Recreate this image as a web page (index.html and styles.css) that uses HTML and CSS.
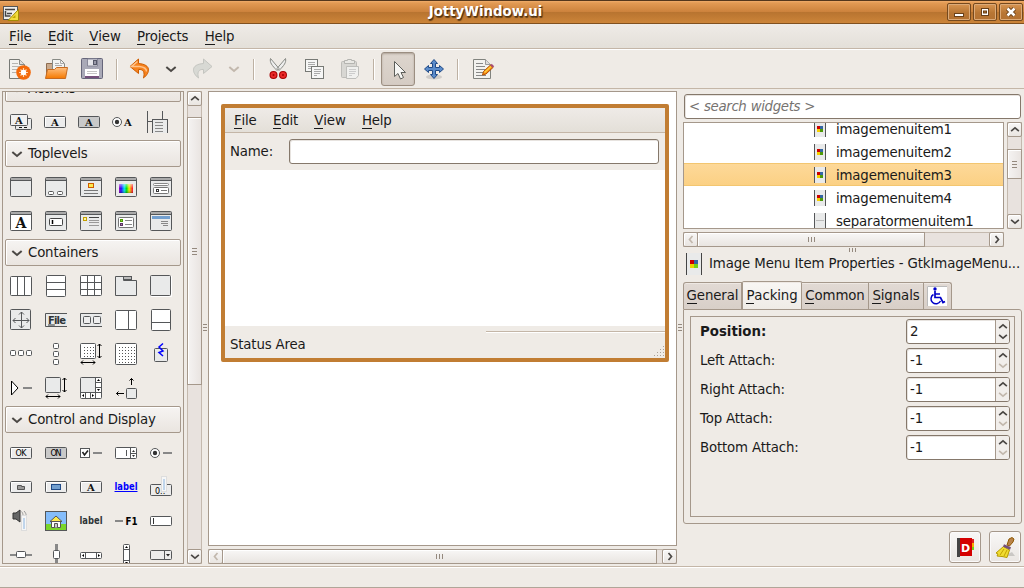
FILE: index.html
```html
<!DOCTYPE html>
<html lang="en">
<head>
<meta charset="utf-8">
<title>JottyWindow.ui</title>
<link rel="stylesheet" href="styles.css">
</head>
<body>
<svg class="defs" width="0" height="0">
  <defs>
    <linearGradient id="rainbow"><stop offset="0" stop-color="#a000c0"/><stop offset=".15" stop-color="#2000ff"/><stop offset=".38" stop-color="#00e0f0"/><stop offset=".55" stop-color="#00e000"/><stop offset=".72" stop-color="#f0f000"/><stop offset="1" stop-color="#ff0030"/></linearGradient>
    <linearGradient id="fade" x2="0" y2="1"><stop offset="0" stop-color="#fff" stop-opacity=".9"/><stop offset=".5" stop-color="#fff" stop-opacity="0"/><stop offset="1" stop-color="#000" stop-opacity=".5"/></linearGradient>
    <linearGradient id="orange" x2="0" y2="1"><stop offset="0" stop-color="#ffc183"/><stop offset="1" stop-color="#f57900"/></linearGradient>
    <pattern id="dots" width="3" height="3" patternUnits="userSpaceOnUse"><rect x="1" y="1" width="1" height="1" fill="#555"/></pattern>
    <symbol id="win" viewBox="0 0 22 22"><rect x=".5" y="1.5" width="21" height="19" rx="1" fill="#e9eaea" stroke="#555759"/><rect x="1" y="2" width="20" height="2" fill="#aaa"/><path d="M1 4.5h20" stroke="#555759"/></symbol>
    <symbol id="btn" viewBox="0 0 22 22"><rect x=".5" y="5.5" width="21" height="11" rx="1" fill="#ececec" stroke="#555759"/><path d="M1.500 15V6.500H21" stroke="#fff" fill="none"/></symbol>
    <symbol id="up" viewBox="0 0 9 6"><path d="M1 4.500l3.500-3 3.500 3" fill="none" stroke="currentColor" stroke-width="1.500"/></symbol>
    <symbol id="down" viewBox="0 0 9 6"><path d="M1 1.500l3.500 3 3.500-3" fill="none" stroke="currentColor" stroke-width="1.500"/></symbol>
    <symbol id="left" viewBox="0 0 6 9"><path d="M4.500 1l-3 3.500 3 3.500" fill="none" stroke="currentColor" stroke-width="1.700"/></symbol>
    <symbol id="right" viewBox="0 0 6 9"><path d="M1.500 1l3 3.500-3 3.500" fill="none" stroke="currentColor" stroke-width="1.700"/></symbol>
    <symbol id="menuitem" viewBox="0 0 12 16"><path d="M0 0h12v16H0z" fill="#e9eaea"/><path d="M.5 0v16M11.500 0v16" stroke="#555759"/><path d="M3 5h3v3H3z" fill="#c00"/><path d="M6 5h3v3H6z" fill="#3465a4"/><path d="M3 8h3v3H3z" fill="#f5d000"/><path d="M6 8h3v3H6z" fill="#4e9a06"/></symbol>
    <symbol id="sizebox" viewBox="0 0 22 22"><path d="M19.500 1v14M1 19.500h14" stroke="#000"/><path d="M17.500 3l2-2 2 2M17.500 13l2 2 2-2M3 17.500l-2 2 2 2M13 17.500l2 2-2 2" fill="none" stroke="#000"/></symbol>
  </defs>
</svg>
<div class="app">
  <header class="titlebar">
    <svg class="app-icon" width="16" height="16"><rect x=".5" y=".5" width="14" height="13" fill="#eeeeec" stroke="#555"/><path d="M2 3.500h10M4 7.500h5M2.500 5v5h5" stroke="#444" stroke-width="1.500" fill="none"/><path d="M15.500 3.500v11H5z" fill="#f2dc3c" stroke="#a38a00"/><path d="M12.500 9v3H9z" fill="#c4a500"/></svg>
    <h1>JottyWindow.ui</h1>
    <div class="winbtns">
      <span><svg width="22" height="16"><rect x="6.500" y="9.500" width="9" height="3" fill="#fff" stroke="#694019"/></svg></span>
      <span><svg width="22" height="16"><rect x="7.500" y="4.500" width="7" height="7" fill="#fff" stroke="#694019"/><rect x="9.500" y="7" width="3" height="2" fill="#b87531" stroke="#694019"/></svg></span>
      <span><svg width="22" height="16"><path d="M7.500 4.500l7 7M14.500 4.500l-7 7" stroke="#694019" stroke-width="4.500"/><path d="M7.500 4.500l7 7M14.500 4.500l-7 7" stroke="#fff" stroke-width="2.500"/></svg></span>
    </div>
  </header>
  <nav class="menubar"><a><u>F</u>ile</a><a><u>E</u>dit</a><a><u>V</u>iew</a><a><u>P</u>rojects</a><a><u>H</u>elp</a></nav>
  <div class="toolbar">
    <span class="tool"><svg width="24" height="24"><path d="M1.500 2.500h10l5 5v14h-15z" fill="#f2f2f0" stroke="#777975"/><path d="M11.500 2.500v5h5" fill="#ddd" stroke="#888a85"/><path d="M4 6.500h6M4 9.500h9M4 12.500h8M4 15.500h4" stroke="#b5b5b2"/><circle cx="15.500" cy="15.500" r="7.300" fill="#f36a0c"/><path d="M15.500 11v9M11 15.500h9M12.500 12.500l6 6M18.500 12.500l-6 6" stroke="#ffd5ac" stroke-width="1.200"/><circle cx="15.500" cy="15.500" r="2.700" fill="#fff"/></svg></span>
    <span class="tool"><svg width="24" height="24"><path d="M2.500 20V6.500h6l1.500 2h10V20z" fill="#c9a98c" stroke="#8d6c50"/><path d="M8.500 2.500h8l4 4V16h-12z" fill="#f3f3f1" stroke="#888a85"/><path d="M16.500 2.500v4h4M11 6.500h4M11 8.500h7" stroke="#aaa" fill="none"/><path d="M1.500 21.500l2-9h7l2-2h11l-2 11z" fill="url(#orange)" stroke="#c66a20"/></svg></span>
    <span class="tool"><svg width="24" height="24"><rect x="1.500" y="1.500" width="21" height="20" rx="1" fill="#a9a9b7" stroke="#66667a"/><rect x="5" y="12" width="14" height="9" fill="#fff"/><path d="M7 14.500h10M7 16.500h10" stroke="#c5c5c5"/><path d="M5 20h14" stroke="#75507b" stroke-width="2"/><path d="M7.500 2h10v7h-10z" fill="#e5e5ea" stroke="#888899"/><rect x="13.500" y="3.500" width="3" height="4" fill="#9999a9" stroke="#555768"/></svg></span>
    <i class="sep"></i>
    <span class="tool"><svg width="24" height="24"><path d="M10.500 2L2 9.500l8.500 7v-4c5-.5 6.500 3 5 8.500 6.500-5 8.500-13.500-5-14.500z" fill="#f6821e" stroke="#ce5c00"/><path d="M9.500 4.500l-6 5h8c5 .5 7 2 7 5" fill="none" stroke="#ffc38b" stroke-width="1.500"/></svg></span>
    <span class="tool arrow"><svg width="12" height="8"><use href="#down"/></svg></span>
    <span class="tool"><svg width="24" height="24"><path d="M13.500 2l8.500 7.500-8.500 7v-4c-5-.5-6.500 3-5 8.500C2 16 0 7.500 13.500 6.500z" fill="#d8d9d4" stroke="#c4c5c0"/></svg></span>
    <span class="tool arrow off"><svg width="12" height="8"><use href="#down"/></svg></span>
    <i class="sep"></i>
    <span class="tool cut"><svg width="24" height="24"><path d="M4.500 1.500c-1 4 1.500 7 6.500 12l2-2z M19.500 1.500c1 4-1.500 7-6.500 12l-2-2z" fill="#eee" stroke="#888a85"/><g fill="none" stroke="#a40000" stroke-width="4"><ellipse cx="7.500" cy="18" rx="2" ry="2"/><ellipse cx="17" cy="18" rx="2" ry="2"/></g><g fill="none" stroke="#e92929" stroke-width="2"><ellipse cx="7.500" cy="18" rx="2" ry="2"/><ellipse cx="17" cy="18" rx="2" ry="2"/></g></svg></span>
    <span class="tool"><svg width="24" height="24" class="px"><rect x="3.500" y="2.500" width="12" height="12" fill="#f6f6f5" stroke="#777975"/><path d="M6 5.500h7M6 7.500h7M6 9.500h6M6 11.500h4" stroke="#aaa"/><rect x="9.500" y="9.500" width="12" height="12" fill="#f6f6f5" stroke="#777975"/><path d="M12 12.500h7M12 14.500h7M12 16.500h6M12 18.500h3" stroke="#aaa"/></svg></span>
    <span class="tool"><svg width="24" height="24"><rect x="3.500" y="4.500" width="15" height="16" rx="1" fill="#d8d7d3" stroke="#bdbcb8"/><path d="M6.500 6.500v-3h3v-1h4v1h3v3z" fill="#e9e8e4" stroke="#b4b4b0"/><path d="M8.500 9.500h12v9l-2.500 3H8.500z" fill="#f0f0ee" stroke="#bebebb"/><path d="M11 12.500h7M11 14.500h7M11 16.500h6M11 18.500h3" stroke="#ccc"/></svg></span>
    <i class="sep tight"></i>
    <span class="tool pressed"><svg width="24" height="24"><path d="M8.500 4.500v15l3.500-3 2.500 5.500 3-1.500-2.500-5h4.500z" fill="#f6f6f4" stroke="#5c5e5a"/></svg></span>
    <span class="tool move"><svg width="24" height="24"><ellipse cx="12" cy="20" rx="8" ry="2.500" fill="#000" opacity=".13"/><path d="M12 2.500l3.500 4h-2v4h4v-2l4 3.500-4 3.500v-2h-4v4h2l-3.500 4-3.500-4h2v-4h-4v2L2.500 12l4-3.500v2h4v-4h-2z" fill="#5b8ccb" stroke="#204a87"/></svg></span>
    <i class="sep tight"></i>
    <span class="tool notes"><svg width="24" height="24"><path d="M2.500 2.500h12l5 5v14h-17z" fill="#f2f2ef" stroke="#81837e"/><path d="M14.500 2.500v5h5" fill="#ddd" stroke="#999"/><path d="M5 6.500h7M5 9.500h9M5 12.500h9M5 15.500h7M5 18.500h10" stroke="#888"/><path d="M11.500 18l1-3.500 7-6.500 2.500 2.500-7 6.500z" fill="#f78a12" stroke="#b35100"/><path d="M13.500 15.500l6.500-6" stroke="#fcd03f" stroke-width="1.500"/><path d="M20 7.500l2.500 2.500" stroke="#a94c74" stroke-width="2"/></svg></span>
  </div>

  <main class="workspace">
    <aside class="palette">
      <div class="palette-list">
        <h2><svg width="12" height="8"><use href="#down"/></svg>Actions</h2>
        <div class="icons narrow">
          <svg><rect x="5.500" y="7.500" width="16" height="11" rx="1" fill="#e9eaea" stroke="#555759"/><rect x=".5" y="3.500" width="17" height="11" rx="1" fill="#f1f1f1" stroke="#555759"/><path d="M9 16.500h3M14 16.500h3" stroke="#111"/><text class="serif" x="5" y="13">A</text></svg>
          <svg><use href="#btn"/><text class="serif" x="7" y="15">A</text></svg>
          <svg><rect x=".5" y="5.500" width="21" height="11" rx="1" fill="#c9c9c9" stroke="#555759"/><text class="serif" x="7" y="15">A</text></svg>
          <svg><circle cx="5" cy="11" r="4.500" fill="#fff" stroke="#555759"/><circle cx="5" cy="11" r="2.200" fill="#333"/><text class="serif" x="12" y="15">A</text></svg>
          <svg class="px"><path d="M1.500 0v22M16.500 0v8" stroke="#555759"/><path d="M2 10.500h4" stroke="#555759"/><path d="M6.500 22V8.500h15V22" fill="#e9eaea" stroke="#555759"/><path d="M9 11.500h8M9 14.500h8M9 17.500h8M9 20.500h8" stroke="#888"/></svg>
        </div>
        <h2><svg width="12" height="8"><use href="#down"/></svg>Toplevels</h2>
        <div class="icons">
          <svg><use href="#win"/></svg>
          <svg><use href="#win"/><rect x="3.500" y="15.500" width="5" height="3" rx="1" fill="#fff" stroke="#555"/><rect x="12.500" y="15.500" width="5" height="3" rx="1" fill="#fff" stroke="#555"/></svg>
          <svg><use href="#win"/><rect x="8.500" y="7.500" width="5" height="4" fill="#fce94f" stroke="#ce5c00"/><path d="M4 14.500h14M4 17.500h14" stroke="#777"/></svg>
          <svg><use href="#win"/><rect x="4" y="8" width="14" height="9" fill="url(#rainbow)"/><rect x="4" y="8" width="14" height="9" fill="url(#fade)" opacity=".6"/></svg>
          <svg><use href="#win"/><rect x="3.500" y="7.500" width="15" height="2" rx="1" fill="#fff" stroke="#888"/><rect x="3.500" y="11.500" width="15" height="6" rx="1" fill="#fff" stroke="#777"/><rect x="6.500" y="13.500" width="2" height="2" fill="#fff" stroke="#333"/><path d="M11 14.500h6" stroke="#777"/></svg>
          <svg><use href="#win"/><path d="M1 5h20v15H1z" fill="#fff"/><text class="serif" style="font-size:14px" x="5.500" y="17.500">A</text></svg>
          <svg><use href="#win"/><rect x="4.500" y="8.500" width="13" height="7" rx="1" fill="#fff" stroke="#444"/><path d="M7.500 10v4" stroke="#000" stroke-width="1.500"/></svg>
          <svg><use href="#win"/><rect x="3.500" y="7.500" width="3" height="3" fill="#fff3a0" stroke="#c4a000"/><path d="M9 7.500h10" stroke="#444"/><path d="M9 10.500h10M9 12.500h10M9 15.500h10" stroke="#999"/></svg>
          <svg><use href="#win"/><rect x="3.500" y="7.500" width="15" height="10" rx="1" fill="#fff" stroke="#777"/><rect x="5.500" y="9.500" width="2" height="2" fill="#8ae234" stroke="#4e9a06"/><rect x="5.500" y="13.500" width="2" height="2" fill="#ad7fa8" stroke="#5c3566"/><path d="M10 10.500h7M10 14.500h7" stroke="#888"/></svg>
          <svg><use href="#win"/><path d="M2 6h18v3H2z" fill="#729fcf"/><path d="M11 11.500h7M11 13.500h7M13 15.500h5" stroke="#888"/></svg>
        </div>
        <h2><svg width="12" height="8"><use href="#down"/></svg>Containers</h2>
        <div class="icons ln">
          <svg><rect x=".5" y="1.500" width="21" height="19" rx="1" fill="#fff"/><path d="M7.500 2v18M14.500 2v18"/></svg>
          <svg><rect x="1.500" y=".5" width="19" height="21" rx="1" fill="#fff"/><path d="M2 7.500h18M2 14.500h18"/></svg>
          <svg><rect x=".5" y=".5" width="21" height="20" rx="1" fill="#fff"/><path d="M7.500 1v19M14.500 1v19M1 7.500h20M1 14.500h20"/></svg>
          <svg><path d="M.5 20.500v-19h8v4h13v15z" fill="#e9eaea"/><rect x="8.500" y="1.500" width="8" height="3" fill="#bbb"/></svg>
          <svg><rect x=".5" y=".5" width="20" height="20" rx="1" fill="#e9eaea"/><path d="M21.500 1v20.500H1" style="stroke:#fff" fill="none"/></svg>
          <svg><rect x=".5" y=".5" width="20" height="20" rx="1" fill="#e9eaea"/><path d="M3 11.500h16M11.500 3v16M9 5.500L11.500 3 14 5.500M9 16.500l2.500 2.500 2.500-2.500M5.500 9L3 11.500 5.500 14M16.500 9l2.500 2.500-2.500 2.500" fill="none"/></svg>
          <svg><path d="M22 4.500H.5v13H22" fill="#e9eaea"/><text class="bold" x="3" y="14.500" textLength="18"><tspan text-decoration="underline">F</tspan>ile</text></svg>
          <svg><path d="M22 4.500H.5v13H22" fill="#e9eaea"/><rect x="3.500" y="7.500" width="7" height="7" rx="1" fill="#eee"/><rect x="13.500" y="7.500" width="7" height="7" rx="1" fill="#eee"/></svg>
          <svg><rect x=".5" y="1.500" width="21" height="19" rx="1" fill="#fff"/><path d="M13.500 2v18"/></svg>
          <svg><rect x="1.500" y=".5" width="19" height="21" rx="1" fill="#fff"/><path d="M2 13.500h18"/></svg>
          <svg><rect x=".5" y="7.500" width="5" height="5" rx="1" fill="#fff"/><rect x="8.500" y="7.500" width="5" height="5" rx="1" fill="#fff"/><rect x="16.500" y="7.500" width="5" height="5" rx="1" fill="#fff"/></svg>
          <svg><rect x="8.500" y=".5" width="5" height="5" rx="1" fill="#fff"/><rect x="8.500" y="8.500" width="5" height="5" rx="1" fill="#fff"/><rect x="8.500" y="16.500" width="5" height="5" rx="1" fill="#fff"/></svg>
          <svg><rect x=".5" y=".5" width="15" height="15" rx="1" fill="#fff"/><rect x="2" y="2" width="12" height="12" fill="url(#dots)" style="stroke:none"/><use href="#sizebox"/></svg>
          <svg><rect x=".5" y=".5" width="21" height="21" rx="1" fill="#fff"/><rect x="2" y="2" width="18" height="18" fill="url(#dots)" style="stroke:none"/></svg>
          <svg><rect x="4.500" y="5.500" width="13" height="13" rx="1" fill="#e9eaea"/><path d="M13 .5L9 4l4 4-4 1.500 4 3.500" fill="none" style="stroke:#00f;stroke-width:1.500"/></svg>
          <svg><path d="M1.500 4v14L8 11z" fill="#fff" style="stroke:#000"/><path d="M13 11h9" style="stroke:#888;stroke-width:2"/></svg>
          <svg><rect x=".5" y=".5" width="15" height="15" rx="1" fill="#e9eaea"/><use href="#sizebox"/></svg>
          <svg><rect x=".5" y=".5" width="21" height="21" rx="1" fill="#fff"/><path d="M1 1h14v14H1z" fill="#e9eaea" stroke="none"/><path d="M15.500 1v20M1 15.500h20M5.500 16v5M10.500 16v5M16 5.500h5M16 10.500h5"/><path d="M17 4l1.500-2L20 4zM17 12l1.500 2L20 12zM4 17v3l-2-1.500zM12 17v3l2-1.500z" fill="#000" stroke="none"/></svg>
          <svg><rect x="11.500" y="11.500" width="10" height="10" rx="1" fill="#e9eaea"/><path d="M16.500 8V1.500M14.500 3.500l2-2 2 2M9 16.500H1.500M3.500 14.500l-2 2 2 2" fill="none" style="stroke:#000"/></svg>
        </div>
        <h2><svg width="12" height="8"><use href="#down"/></svg>Control and Display</h2>
        <div class="icons">
          <svg><use href="#btn"/><text class="tiny" x="5.500" y="14" textLength="11">OK</text></svg>
          <svg><rect x=".5" y="5.500" width="21" height="11" rx="1" fill="#c9c9c9" stroke="#555759"/><text class="tiny" x="5.500" y="14" textLength="11">ON</text></svg>
          <svg><rect x=".5" y="6.500" width="9" height="9" fill="#fff" stroke="#555759"/><path d="M2.500 10l2 3L8 8.500" fill="none" stroke="#222" stroke-width="1.600"/><path d="M13 11h9" stroke="#888" stroke-width="2"/></svg>
          <svg><rect x=".5" y="5.500" width="21" height="11" rx="1" fill="#fff" stroke="#555759"/><path d="M15.500 6v10M16 11.500h5M11.500 8v6" stroke="#555759"/><path d="M17 10l1.500-2L20 10zM17 13l1.500 2L20 13z" fill="#333"/></svg>
          <svg><circle cx="5" cy="11" r="4.500" fill="#fff" stroke="#555759"/><circle cx="5" cy="11" r="2.200" fill="#333"/><path d="M13 11h9" stroke="#888" stroke-width="2"/></svg>
          <svg><use href="#btn"/><path d="M7.500 13.500v-4h4v1h3v3z" fill="#999" stroke="#555"/></svg>
          <svg><use href="#btn"/><rect x="6.500" y="8.500" width="9" height="5" fill="#729fcf" stroke="#204a87"/></svg>
          <svg><use href="#btn"/><text class="serif" x="7" y="15">A</text></svg>
          <svg><text class="bold" x="-.5" y="14" textLength="23" lengthAdjust="spacingAndGlyphs" style="fill:#00f;text-decoration:underline">label</text></svg>
          <svg><rect x=".5" y="8.500" width="21" height="11" rx="1" fill="#ececec" stroke="#555759"/><text class="tiny" x="5" y="17.500">0..</text><rect x="11.500" y=".5" width="5" height="15" fill="#f6f6f6" stroke="#ddd"/><path d="M14 3v11" stroke="#8ab4e0"/></svg>
          <svg><path d="M3 3h3l4-3v12L6 9H3z" fill="#666" stroke="#333"/><path d="M11.500 1.500c2 2 2 6 0 8M14 1c3 3 3 7 0 10" fill="none" stroke="#999"/><rect x="11.500" y="5.500" width="5" height="15" fill="#f6f6f6" stroke="#ddd"/><path d="M14 8v11" stroke="#8ab4e0"/></svg>
          <svg><rect x=".5" y="1.500" width="21" height="19" fill="#85bdfb" stroke="#555759"/><path d="M1 14h20v6H1z" fill="#79d52b"/><path d="M6.500 11v6.500h9V11" fill="#fff" stroke="#555"/><path d="M5 11.500l6-5.500 6 5.500z" fill="#fce94f" stroke="#555"/><path d="M9.500 17.500v-4h3v4" fill="#ccc" stroke="#555"/></svg>
          <svg><text class="bold" x="-.5" y="14" textLength="23" lengthAdjust="spacingAndGlyphs">label</text></svg>
          <svg><path d="M0 11h8" stroke="#888" stroke-width="2"/><text class="bold" x="10.500" y="14.500" textLength="12" lengthAdjust="spacingAndGlyphs" style="fill:#000">F1</text></svg>
          <svg><rect x=".5" y="6.500" width="21" height="9" rx="1" fill="#fff" stroke="#555759"/><path d="M3.500 8v6" stroke="#333"/></svg>
          <svg><path d="M0 11h22" stroke="#888" stroke-width="2"/><rect x="6.500" y="7.500" width="9" height="6" rx="1" fill="#fff" stroke="#555759"/></svg>
          <svg><path d="M11.500 0v22" stroke="#888" stroke-width="3"/><rect x="8.500" y="6.500" width="6" height="8" rx="1" fill="#fff" stroke="#555759"/></svg>
          <svg><rect x=".5" y="8.500" width="21" height="6" rx="1" fill="#fff" stroke="#555759"/><path d="M5.500 9v5M16.500 9v5" stroke="#555759"/><path d="M4 10v3l-2-1.500zM18 10v3l2-1.500z" fill="#000"/></svg>
          <svg><rect x="8.500" y=".5" width="6" height="21" rx="1" fill="#fff" stroke="#555759"/><path d="M9 5.500h5M9 16.500h5" stroke="#555759"/><path d="M10 4h3l-1.500-2zM10 18h3l-1.500 2z" fill="#000"/></svg>
          <svg><rect x=".5" y="6.500" width="21" height="9" rx="1" fill="#ececec" stroke="#555759"/><path d="M14.500 7v8" stroke="#555759"/><path d="M16 10h4l-2 2.500z" fill="#222"/></svg>
        </div>
      </div>
      <div class="vscroll">
        <b class="sbtn"><svg width="10" height="7"><use href="#up"/></svg></b>
        <b class="thumb pal-thumb"><i class="grip-h"></i></b>
        <b class="sbtn end"><svg width="10" height="7"><use href="#down"/></svg></b>
      </div>
    </aside>
    <div class="splitter"><i class="grip-h"></i></div>

    <section class="editor">
      <div class="canvas">
        <div class="design">
          <nav class="menubar inner"><a><u>F</u>ile</a><a><u>E</u>dit</a><a><u>V</u>iew</a><a><u>H</u>elp</a></nav>
          <div class="namerow"><label>Name:</label><span class="entry"></span></div>
          <div class="textarea"></div>
          <div class="status"><span>Status Area</span><div class="statusframe"><svg class="px" width="12" height="12"><path d="M10.500 0v12M7.500 3v9M4.500 6v6M1.500 9v3" stroke="#aaa197" stroke-dasharray="1 2"/></svg></div></div>
        </div>
      </div>
      <div class="hscroll">
        <b class="sbtn off"><svg width="6" height="9"><use href="#left"/></svg></b>
        <b class="thumb ed-thumb"><i class="grip-v"></i></b>
        <b class="sbtn end"><svg width="6" height="9"><use href="#right"/></svg></b>
      </div>
    </section>
    <div class="splitter second"><i class="grip-h"></i></div>

    <aside class="inspector">
      <div class="entry search">&lt; search widgets &gt;</div>
      <div class="treewrap">
        <div class="tree">
          <div><svg width="12" height="16"><use href="#menuitem"/></svg>imagemenuitem1</div>
          <div><svg width="12" height="16"><use href="#menuitem"/></svg>imagemenuitem2</div>
          <div class="selected"><svg width="12" height="16"><use href="#menuitem"/></svg>imagemenuitem3</div>
          <div><svg width="12" height="16"><use href="#menuitem"/></svg>imagemenuitem4</div>
          <div><svg width="12" height="16"><path d="M0 0h12v16H0z" fill="#e9eaea"/><path d="M.5 0v16M11.500 0v16" stroke="#555759"/><path d="M2 7.500h8" stroke="#bbb"/></svg>separatormenuitem1</div>
        </div>
        <div class="vscroll">
          <b class="sbtn"><svg width="10" height="7"><use href="#up"/></svg></b>
          <b class="thumb tree-thumb"><i class="grip-h"></i></b>
          <b class="sbtn end"><svg width="10" height="7"><use href="#down"/></svg></b>
        </div>
      </div>
      <div class="hscroll short">
        <b class="sbtn off"><svg width="6" height="9"><use href="#left"/></svg></b>
        <b class="thumb tree-hthumb"><i class="grip-v"></i></b>
        <b class="sbtn end"><svg width="6" height="9"><use href="#right"/></svg></b>
      </div>
      <div class="hsplit"><i class="grip-v"></i></div>
      <div class="prop-title"><svg width="16" height="22"><path d="M0 0h16v22H0z" fill="#e9eaea"/><path d="M.5 0v22M15.500 0v22" stroke="#444"/><path d="M4 7h4v4H4z" fill="#c00"/><path d="M8 7h4v4H8z" fill="#3465a4"/><path d="M4 11h4v4H4z" fill="#edd400"/><path d="M8 11h4v4H8z" fill="#73d216"/></svg><span>Image Menu Item Properties - GtkImageMenu...</span></div>
      <div class="tabs">
        <div class="tab t1"><u>G</u>eneral</div><div class="tab active"><u>P</u>acking</div><div class="tab t3"><u>C</u>ommon</div><div class="tab t4"><u>S</u>ignals</div>
        <div class="tab t5"><svg width="20" height="20"><rect width="20" height="20" fill="#fff"/><path d="M.5 20V.5H20" stroke="#bbb" fill="none"/><circle cx="8" cy="3" r="1.700" fill="#0000c8"/><path d="M8 5v6.500h5.500l2.500 5 2-1M8 8h5" fill="none" stroke="#0000c8" stroke-width="1.700"/><path d="M6.500 8.500a5 5 0 1 0 7 6.500" fill="none" stroke="#0000c8" stroke-width="1.500"/></svg></div>
      </div>
      <div class="notebook"><div class="form">
        <div class="field"><label class="strong">Position:</label><div class="entry spin"><span>2</span><b><svg width="10" height="7"><use href="#up"/></svg><svg width="10" height="7"><use href="#down"/></svg></b></div></div>
        <div class="field"><label>Left Attach:</label><div class="entry spin"><span>-1</span><b><svg width="10" height="7"><use href="#up"/></svg><svg class="off" width="10" height="7"><use href="#down"/></svg></b></div></div>
        <div class="field"><label>Right Attach:</label><div class="entry spin"><span>-1</span><b><svg width="10" height="7"><use href="#up"/></svg><svg class="off" width="10" height="7"><use href="#down"/></svg></b></div></div>
        <div class="field"><label>Top Attach:</label><div class="entry spin"><span>-1</span><b><svg width="10" height="7"><use href="#up"/></svg><svg class="off" width="10" height="7"><use href="#down"/></svg></b></div></div>
        <div class="field"><label>Bottom Attach:</label><div class="entry spin"><span>-1</span><b><svg width="10" height="7"><use href="#up"/></svg><svg class="off" width="10" height="7"><use href="#down"/></svg></b></div></div>
      </div></div>
      <div class="actions">
        <button><svg width="22" height="22"><path d="M17 3h3v16h-3z" fill="#eee"/><path d="M18 3h2v4h-2z" fill="#d22"/><path d="M18 7h2v4h-2z" fill="#f5b000"/><path d="M18 11h2v3h-2z" fill="#73d216"/><path d="M4 2h14v18H4z" fill="#d40000"/><path d="M3 2h3v19H3z" fill="#444"/><text x="7" y="15.500" class="dletter">D</text></svg></button>
        <button><svg width="22" height="22"><path d="M10 20h11l-3-4z" opacity=".15"/><path d="M13 9l2-6 3-1.500 2 1.500-1 3-3.500 4z" fill="#b9834a" stroke="#8f5902"/><path d="M9.500 10.500L2 17l2 1-1 2 5 .5 5 1 2.500-7.500z" fill="#f0dc30" stroke="#b59a00"/><path d="M9.500 9.500l7 3" stroke="#75507b" stroke-width="2.500"/><path d="M10 13l-4 6M13 14l-3 6" stroke="#c4a000"/></svg></button>
      </div>
    </aside>
  </main>
  <footer class="statusbar"></footer>
</div>
</body>
</html>
```

FILE: styles.css
```css
* { box-sizing: border-box; }
body { margin: 0; font: 13.33px/16px "DejaVu Sans", sans-serif; letter-spacing: -.17px; color: #1a1a1a; background: #efebe7; }
svg { display: block; flex: none; overflow: visible; color: #4b4845; letter-spacing: 0; }
svg.px { shape-rendering: crispEdges; }
.defs { position: absolute; }
u { text-decoration: none; border-bottom: 1px solid #1a1a1a; display: inline-block; line-height: 14px; }
h1, h2 { margin: 0; font-size: inherit; font-weight: 400; }
.app { width: 1024px; height: 588px; display: flex; flex-direction: column; overflow: hidden; background: #efebe6; border-bottom: 1px solid #b0a598; }

.titlebar { height: 24px; flex: none; display: flex; border-top: 1px solid #54371c; border-bottom: 1px solid #80501f; background: linear-gradient(#f0ad6b 0, #e29a53 2px, #cd833d 48%, #b87430 52%, #cc8439 100%); }
.app-icon { margin: 5px 5px 0 3px; }
.titlebar h1 { flex: 1; text-align: center; color: #fff; font-weight: 700; letter-spacing: 0; line-height: 21px; text-shadow: 1px 1px 1px #4e3010, 1px 2px 1px #6b451c; }
.winbtns { display: flex; gap: 2px; padding: 2px 1px 0 0; }
.winbtns span { width: 24px; height: 18px; border: 1px solid #75491e; border-radius: 2px; box-shadow: inset 0 0 0 1px #dcaa78; background: linear-gradient(#d89552, #b87634 55%, #b47131); }

.menubar { height: 26px; flex: none; display: flex; gap: 16.300px; padding: 5px 9px 0; background: linear-gradient(#efebe7, #e3dfd8); border-bottom: 1px solid #fff; box-shadow: inset 0 -1px #c4b6a7; }
.toolbar { height: 39px; flex: none; display: flex; align-items: center; padding-left: 2px; border-bottom: 1px solid #c4b6a7; }
.tool { width: 36px; height: 34px; display: flex; align-items: center; justify-content: center; }
.tool.arrow { width: 26px; }
.tool.arrow.off { width: 27px; }
.tool.cut { margin-left: 1px; }
.tool.notes { margin-left: 2px; }
.sep { width: 6px; height: 21px; border-left: 1px solid #bdb1a3; margin-left: 6px; box-shadow: inset 1px 0 #fff; }
.sep.tight { margin-left: 5px; }
.tool.pressed { width: 34px; margin: 0 1px 0 2px; border: 1px solid #9b8e81; border-radius: 3px; background: linear-gradient(#ddd5cd, #d5ccc4); box-shadow: inset 0 1px 2px #aea398; }
.off { color: #c2b8ad; }
.off svg { color: #c2b8ad; }

.workspace { height: 477px; flex: none; display: flex; padding: 2px; }
.palette { display: flex; gap: 3px; height: 473px; }
.palette-list { width: 182px; border: 1px solid #a5988b; overflow: hidden; }
.palette-list h2 { width: 176px; height: 27px; margin: 1px 0 3px 2px; padding: 0 5px; display: flex; align-items: center; gap: 5px; border: 1px solid #a5988b; border-radius: 2px; background: linear-gradient(#f6f4f2, #eae5e0); box-shadow: inset 1px 1px #fff; }
.palette-list h2:first-child { margin-top: -17px; }
.icons { display: grid; grid-template-columns: repeat(5, 35px); grid-auto-rows: 34px; padding-left: 7px; align-items: center; }
.icons.narrow { grid-template-columns: repeat(5, 34px); }
.icons svg { width: 22px; height: 22px; }
.ln svg { stroke: #555759; }
.ln text { stroke: none; }
.serif { font: 700 10px "DejaVu Serif", serif; fill: #111; stroke: none; }
.bold { font: 700 10px "DejaVu Sans", sans-serif; fill: #2e3436; }
.tiny { font: 8px "DejaVu Sans", sans-serif; fill: #000; }
.dletter { font: 700 11px "DejaVu Sans", sans-serif; fill: #fff; }

.vscroll { width: 15px; display: flex; flex-direction: column; background: #e8e2de; border: solid #c4b9ae; border-width: 0 1px; }
.hscroll { height: 15px; display: flex; background: #e8e2de; border: solid #c4b9ae; border-width: 1px 0; }
.vscroll b { margin: 0 -1px; }
.hscroll b { margin: -1px 0; }
.sbtn, .thumb { display: flex; align-items: center; justify-content: center; flex: none; border: 1px solid #a5988b; background: linear-gradient(#f8f7f6, #e9e5e1); box-shadow: inset 1px 1px #fff; }
.sbtn { width: 15px; height: 15px; border-radius: 2px; }
.vscroll .end { margin-top: auto; }
.hscroll .end { margin-left: auto; }
.vscroll .thumb { background: linear-gradient(90deg, #f5f3f2, #e9e4e1); }
.vscroll .pal-thumb { height: 268px; margin-top: 11px; }
.vscroll .tree-thumb { height: 30px; margin-top: 12px; }
.hscroll .thumb { margin-left: -1px; }
.ed-thumb { width: 435px; }
.tree-hthumb { width: 228px; }
.grip-h { width: 5px; height: 7px; background: repeating-linear-gradient(#94897e 0 1px, transparent 1px 3px); }
.grip-v { width: 7px; height: 5px; background: repeating-linear-gradient(90deg, #94897e 0 1px, transparent 1px 3px); }

.splitter { width: 6px; display: flex; align-items: center; justify-content: center; }
.splitter .grip-h { width: 4px; }
.editor { width: 469px; display: flex; flex-direction: column; gap: 3px; }
.canvas { height: 455px; padding: 12px 7px 0 12px; border: 1px solid #a5988b; background: #fff; }
.design { width: 448px; height: 258px; border: 4px solid #c17d33; border-radius: 2px; background: #efebe6; }
.menubar.inner { height: 25px; border: 0; padding: 5px 9px 0; }
.namerow { height: 37px; display: flex; align-items: center; padding: 0 6px 0 5px; gap: 16px; }
.namerow .entry { flex: 1; height: 25px; }
.entry { border: 1px solid #85786b; border-radius: 3px; background: #fff; box-shadow: inset 1px 1px #e7e3df; }
.textarea { height: 156px; background: #fff; }
.status { height: 32px; display: flex; justify-content: space-between; padding: 5px 0 0 5px; }
.status > span { padding-top: 6px; }
.statusframe { width: 179px; border-top: 1px solid #c4b6a7; box-shadow: inset 0 1px #fff; display: flex; align-items: flex-end; justify-content: flex-end; }

.inspector { width: 339px; display: flex; flex-direction: column; }
.search { height: 25px; margin: 3px 1px 3px 1px; padding: 4px; font-style: italic; letter-spacing: -.35px; word-spacing: .3px; color: #767371; flex: none; }
.treewrap { display: flex; gap: 3px; height: 107px; flex: none; }
.tree { width: 321px; border: 1px solid #a5988b; background: #fff; overflow: hidden; }
.tree div { height: 23px; padding: 1px 0 0 130px; display: flex; align-items: center; gap: 10px; line-height: 21px; }
.tree div:first-child { margin-top: -6px; }
.tree .selected { background: linear-gradient(#fdd99a, #fbd083); box-shadow: inset 0 1px #f3c670, inset 0 -1px #f3c670; }
.hscroll.short { width: 321px; margin-top: 3px; flex: none; }
.hsplit { height: 6px; display: flex; justify-content: center; align-items: center; flex: none; }
.hsplit .grip-v { height: 4px; }
.prop-title { height: 22px; display: flex; gap: 7px; padding-left: 3px; letter-spacing: -.12px; line-height: 21px; white-space: nowrap; flex: none; }
.tabs { height: 29px; margin-top: 5px; display: flex; align-items: flex-end; flex: none; }
.tab { height: 27px; border: 1px solid #a5988b; border-width: 1px 1px 0 0; background: linear-gradient(#e2dad4, #d8cfc8); padding: 5px 0 0; text-align: center; letter-spacing: -.1px; box-shadow: inset 0 1px #eee8e3; }
.t1 { width: 59px; border-left-width: 1px; border-radius: 3px 0 0; }
.tab.active { width: 60px; height: 29px; margin-bottom: -1px; padding-top: 6px; background: linear-gradient(#f8f6f4, #efebe6); border-radius: 2px 2px 0 0; border-left-width: 1px; }
.t3 { width: 67px; }
.t4 { width: 55px; }
.t5 { width: 28px; padding: 3px 0 0 3px; border-radius: 0 3px 0 0; }
.notebook { height: 215px; padding: 6px; border: 1px solid #a5988b; border-radius: 0 3px 3px; flex: none; }
.form { height: 201px; padding: 2px 4px 0 9px; border: 1px solid #a5988b; display: flex; flex-direction: column; gap: 4px; }
.field { display: flex; justify-content: space-between; align-items: center; height: 25px; }
.strong { font-weight: 700; letter-spacing: 0; }
.spin { width: 104px; height: 25px; display: flex; overflow: hidden; }
.spin span { flex: 1; padding: 4px 3px; }
.spin b { width: 14px; display: flex; flex-direction: column; justify-content: space-around; align-items: center; padding: 1px 0; border-left: 1px solid #a5988b; background: #f1eeeb; }
.spin .off { color: #c2b8ad; }
.actions { display: flex; gap: 8px; justify-content: flex-end; margin: 7px 1px 0 0; }
.actions button { width: 32px; height: 32px; padding: 4px; border: 1px solid #a5988b; border-radius: 3px; background: linear-gradient(#f8f7f6, #eae6e2); box-shadow: inset 0 0 0 1px #fbfafa; }
.statusbar { flex: 1; border-top: 1px solid #c4b6a7; box-shadow: inset 0 1px #fff; }
```
